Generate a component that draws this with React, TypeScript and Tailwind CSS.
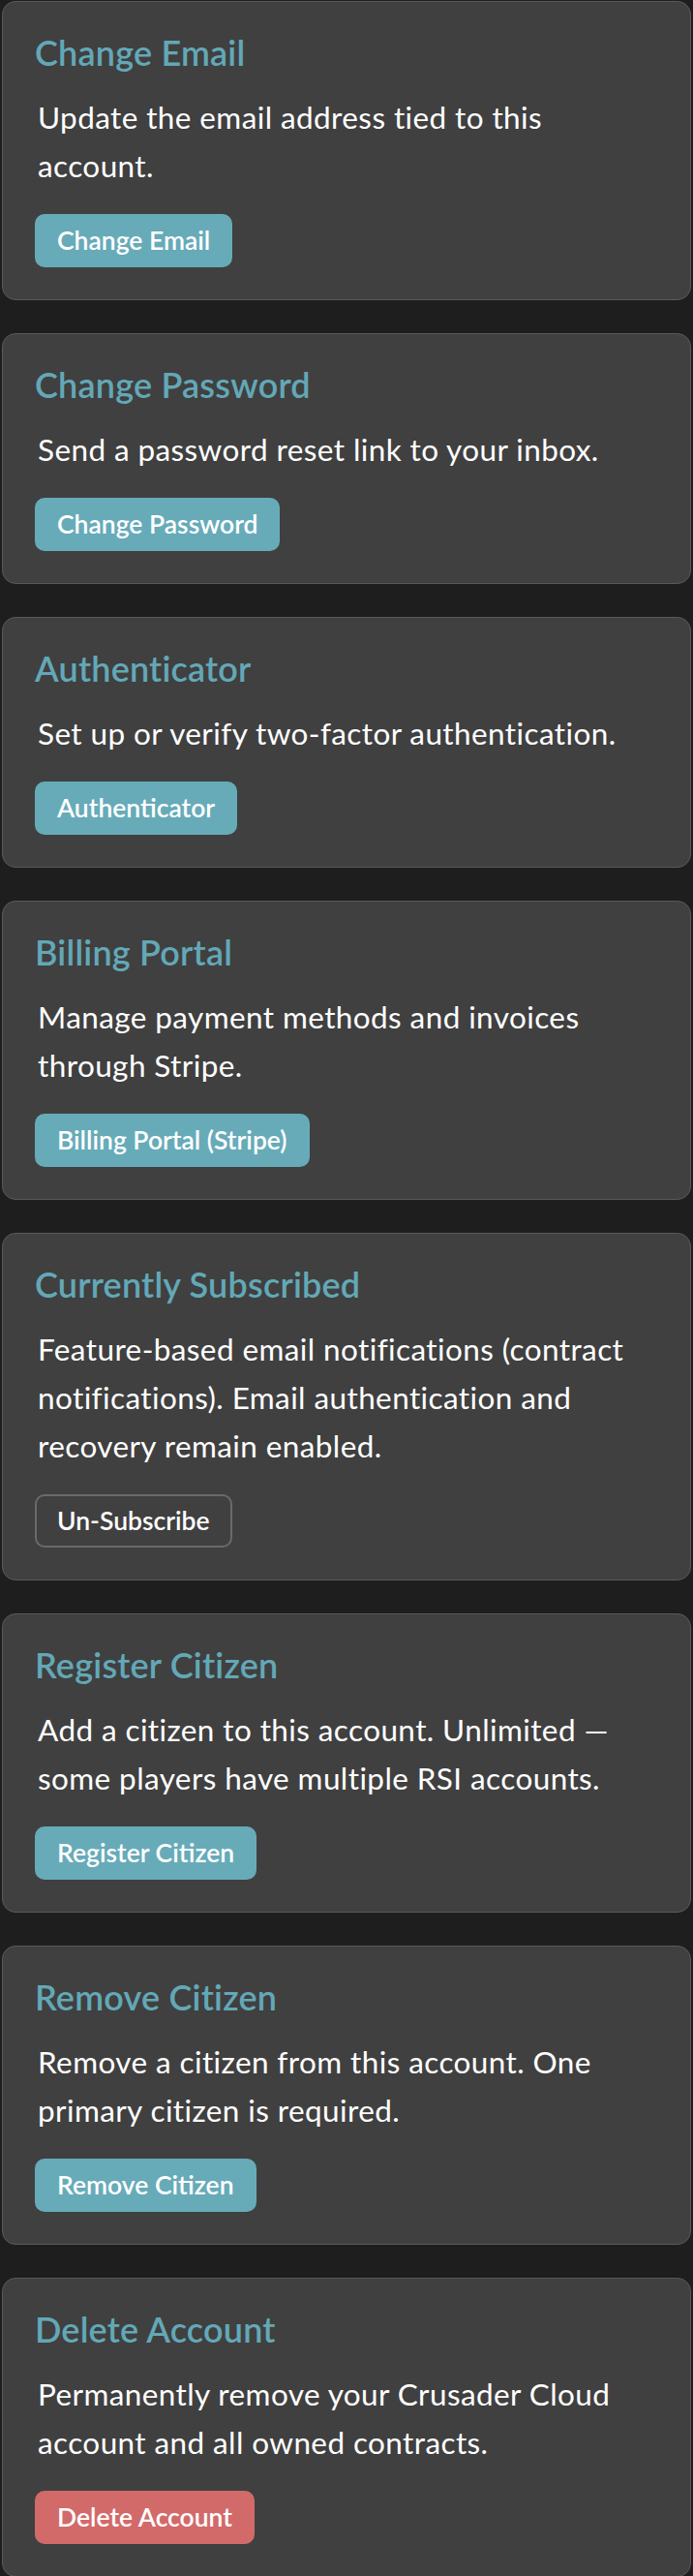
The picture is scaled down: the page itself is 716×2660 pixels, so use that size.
import React from "react";

type Card = {
  title: string;
  body: string;
  button: string;
  variant: "teal" | "outline" | "red";
};

const cards: Card[] = [
  { title: "Change Email", body: "Update the email address tied to this account.", button: "Change Email", variant: "teal" },
  { title: "Change Password", body: "Send a password reset link to your inbox.", button: "Change Password", variant: "teal" },
  { title: "Authenticator", body: "Set up or verify two-factor authentication.", button: "Authenticator", variant: "teal" },
  { title: "Billing Portal", body: "Manage payment methods and invoices through Stripe.", button: "Billing Portal (Stripe)", variant: "teal" },
  { title: "Currently Subscribed", body: "Feature-based email notifications (contract notifications). Email authentication and recovery remain enabled.", button: "Un-Subscribe", variant: "outline" },
  { title: "Register Citizen", body: "Add a citizen to this account. Unlimited — some players have multiple RSI accounts.", button: "Register Citizen", variant: "teal" },
  { title: "Remove Citizen", body: "Remove a citizen from this account. One primary citizen is required.", button: "Remove Citizen", variant: "teal" },
  { title: "Delete Account", body: "Permanently remove your Crusader Cloud account and all owned contracts.", button: "Delete Account", variant: "red" },
];

function buttonClass(v: Card["variant"]) {
  if (v === "teal") return "bg-[#67abb9] border-2 border-[#67abb9]";
  if (v === "red") return "bg-[#d36a6a] border-2 border-[#d36a6a]";
  return "bg-transparent border-2 border-[#6a6a6a]";
}

export default function App() {
  return (
    <div
      className="min-h-[2660px] bg-[#1e1e1e] px-[2px] pt-[1px] pb-[3px] flex flex-col gap-[34px]"
      style={{ fontFamily: "Lato, 'Noto Sans', sans-serif" }}
    >
      {cards.map((c) => (
        <div
          key={c.title}
          className="rounded-[14px] border border-[#595959] bg-[#404040] pl-[33px] pr-[32px] pt-[30px] pb-[33px] flex flex-col items-start"
        >
          <h2 className="text-[36px] leading-[44px] font-semibold tracking-[0.2px] text-[#63a8b7]">{c.title}</h2>
          <p className="mt-[20px] ml-[3px] max-w-[622px] text-[31.5px] leading-[50px] tracking-[0.4px] text-white">{c.body}</p>
          <button
            className={`mt-[25px] h-[55px] px-[21px] rounded-[10px] text-[26.5px] font-semibold text-white ${buttonClass(c.variant)}`}
          >
            {c.button}
          </button>
        </div>
      ))}
    </div>
  );
}
